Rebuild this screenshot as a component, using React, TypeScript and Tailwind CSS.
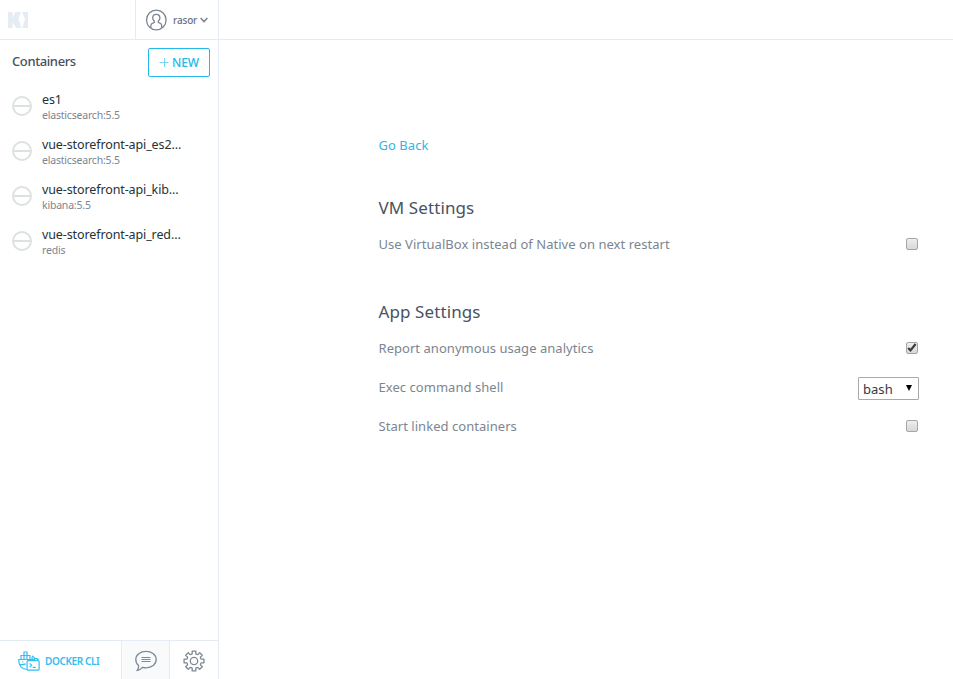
const containers = [
  { name: 'es1', image: 'elasticsearch:5.5' },
  { name: 'vue-storefront-api_es2...', image: 'elasticsearch:5.5' },
  { name: 'vue-storefront-api_kib...', image: 'kibana:5.5' },
  { name: 'vue-storefront-api_red...', image: 'redis' },
];

function gearPath() {
  const profile: [number, number][] = [
    [7.2, -22.5], [7.4, -14], [10.1, -10.5], [10.1, 10.5], [7.4, 14],
  ];
  const points: string[] = [];
  for (let tooth = 0; tooth < 8; tooth++) {
    for (const [radius, offset] of profile) {
      const a = ((tooth * 45 + offset) * Math.PI) / 180;
      points.push(`${(11 + radius * Math.cos(a)).toFixed(2)} ${(11 + radius * Math.sin(a)).toFixed(2)}`);
    }
  }
  return `M${points.join('L')}Z`;
}

function Logo() {
  return (
    <svg width="20" height="16" viewBox="0 0 20 16" fill="#e5ecf4">
      <path d="M0 0h4.6v5.5L7.6 0H13l-2.6 6.5L13.4 16H8L4.6 10v6H0z" />
      <path d="M14.2 0H20v16h-5.8L17 7z" />
    </svg>
  );
}

function UserIcon() {
  return (
    <svg width="22" height="22" viewBox="0 0 22 22" fill="none" stroke="#7a8491" strokeWidth="1.3">
      <circle cx="11.3" cy="11" r="9.8" />
      <path d="M5.9 18.5v-2.2c0-1.4 1-2 2.4-2.5l1-.5v-1.2C8.1 11 7.7 9.9 7.7 8.9c0-2.2 1.5-3.6 3.6-3.6s3.6 1.4 3.6 3.6c0 1-.4 2.1-1.6 3.2v1.2l1 .5c1.4.5 2.4 1.1 2.4 2.5v2.2" />
    </svg>
  );
}

function StoppedIcon() {
  return (
    <svg className="shrink-0" width="20" height="20" viewBox="0 0 20 20" fill="none" stroke="#dbe2e1" strokeWidth="2">
      <circle cx="10" cy="10" r="9" />
      <path d="M1 10h18" />
    </svg>
  );
}

function DockerIcon() {
  return (
    <svg width="22" height="20" viewBox="0 0 22 20" fill="none" stroke="#35bdf0" strokeWidth="1.2">
      <path d="M8.5 18.4C4 18.4.8 14.6.8 9.8V8.5h16.4M3 8.5V4.5h9v4M6 4.5v4M9 1v7.5M6 4.5V1h3v3.5M14.2 8.5c-.6-1.5-.2-2.6.6-3.4 1 .8 1.6 1.5 1.5 2.3 1.4-.3 2.7 0 3.8.7-.8 1-1.6 1.4-2.5 1.4M1.6 13.5c2 .4 4.2.2 6-.6M4.8 10.4v1.2" />
      <rect x="9.1" y="9.6" width="12" height="9.6" rx="1" fill="#fff" />
      <path d="m11.7 12.4 2 1.9-2 1.9M14.7 16.3h3" />
    </svg>
  );
}

function ChatIcon() {
  return (
    <svg width="22" height="22" viewBox="0 0 22 22" fill="none" stroke="#7f8996" strokeWidth="1.3">
      <path d="M3.6 15.6C1.8 14.1.8 11.9.8 9.6.8 4.8 5.2 1.4 11 1.4s10.2 3.4 10.2 8.2-4.4 8.2-10.2 8.2c-1.3 0-2.5-.2-3.6-.5-1.6 1.9-3.3 2.8-5.1 3.1 1-1.3 1.4-3.2 1.3-4.8z" />
      <path d="M6.5 7.5h9M6.5 9.5h9M6.5 11.5h9" strokeWidth="1" />
    </svg>
  );
}

function Checkbox({ checked = false }: { checked?: boolean }) {
  return (
    <span className="flex size-3 shrink-0 rounded-[2px] border border-[#a6a6a6] bg-linear-to-b from-[#eeeeee] to-[#d8d8d8]">
      {checked && (
        <svg className="-mt-px" width="10" height="11" viewBox="0 0 10 11" fill="none" stroke="#3c3c3c" strokeWidth="2.2">
          <path d="m1.2 6 2.3 2.4L8.6 2" />
        </svg>
      )}
    </span>
  );
}

export default function App() {
  return (
    <div className="flex h-[679px] w-[953px] flex-col overflow-hidden bg-white font-['Noto_Sans',sans-serif]">
      <header className="flex h-10 shrink-0 border-b border-[#e5ebf4]">
        <div className="flex w-[135px] items-center pt-px pl-2">
          <Logo />
        </div>
        <div className="flex w-[84px] items-center border-x border-[#e5ebf4] pl-[9px]">
          <UserIcon />
          <span className="ml-[6px] w-[24px] pt-px text-[10px] leading-4 font-medium tracking-[-0.15px] text-[#69727f]">rasor</span>
          <svg className="ml-[3px]" width="8" height="6" viewBox="0 0 8 6" fill="none" stroke="#7a8491" strokeWidth="1.5">
            <path d="m.6 1 3.4 3.6L7.4 1" />
          </svg>
        </div>
      </header>
      <div className="flex min-h-0 flex-1">
        <aside className="flex w-[219px] shrink-0 flex-col border-r border-[#e5ebf4]">
          <div className="flex h-[45px] items-start justify-between pt-2 pr-2 pl-3">
            <h2 className="mt-[4px] text-[13px] leading-[18px] font-medium tracking-[-0.4px] text-[#48505b]">Containers</h2>
            <button className="flex h-[29px] w-[62px] items-center rounded-[2px] border border-[#24b8eb] pl-[10px] text-[#24b8eb]">
              <svg width="10" height="10" viewBox="0 0 10 10" fill="none" stroke="currentColor" strokeWidth="1" opacity=".6">
                <path d="M.5 4.5h9M5.5 0v9" />
              </svg>
              <span className="ml-[3px] text-[12px] leading-4 font-medium tracking-[-0.1px]">NEW</span>
            </button>
          </div>
          <ul className="flex-1">
            {containers.map((c) => (
              <li key={c.name} className="flex h-[45px] items-center pl-3">
                <div className="mt-[-3px] flex">
                  <StoppedIcon />
                </div>
                <div className="mt-[-3px] ml-[10px] whitespace-nowrap">
                  <div className="text-[12.5px] leading-[17px] tracking-[-0.11px] text-[#253237]">{c.name}</div>
                  <div className="text-[10.5px] leading-[14px] tracking-[-0.2px] text-[#7c8591]">{c.image}</div>
                </div>
              </li>
            ))}
          </ul>
          <div className="flex h-[39px] border-t border-[#e5ebf4]">
            <div className="flex w-[121px] items-center pt-[2px] pl-[18px] text-[#35bdf0]">
              <DockerIcon />
              <span className="ml-[5px] text-[10px] leading-4 font-semibold tracking-[-0.38px] whitespace-nowrap">DOCKER CLI</span>
            </div>
            <div className="flex w-[49px] items-center border-x border-[#e5ebf4] bg-[#f9fafc] pt-px pl-[13px]">
              <ChatIcon />
            </div>
            <div className="flex flex-1 items-center justify-center pt-px">
              <svg width="22" height="22" viewBox="0 0 22 22" fill="none" stroke="#7f8996" strokeWidth="1.3">
                <path d={gearPath()} strokeLinejoin="round" />
                <circle cx="11" cy="11" r="3.7" />
              </svg>
            </div>
          </div>
        </aside>
        <main className="flex flex-1 flex-col pt-[95px] pr-[35px] pl-[159.5px] text-[13px] leading-5 tracking-[0.04px] text-[#7c8591]">
          <a className="text-[#35b4e2]">Go Back</a>
          <h1 className="mt-[40px] text-[17px] leading-[26px] tracking-[0.1px] text-[#4a5260]">VM Settings</h1>
          <div className="mt-[13px] flex h-5 items-center justify-between">
            <span>Use VirtualBox instead of Native on next restart</span>
            <Checkbox />
          </div>
          <h1 className="mt-[45px] text-[17px] leading-[26px] tracking-[0.1px] text-[#4a5260]">App Settings</h1>
          <div className="mt-[13px] flex h-5 items-center justify-between">
            <span>Report anonymous usage analytics</span>
            <Checkbox checked />
          </div>
          <div className="mt-[19px] flex h-5 items-center justify-between">
            <span>Exec command shell</span>
            <div className="mt-[3px] mr-[-1px] flex h-[23px] w-[61px] items-center rounded-[1px] border border-[#a9a9a9] pl-1 text-[#333b45]">
              <span className="w-[43px]">bash</span>
              <svg className="mt-[-2px]" width="6" height="6" viewBox="0 0 6 6">
                <path d="M0 0h6L3 6z" fill="#000" />
              </svg>
            </div>
          </div>
          <div className="mt-[19px] flex h-5 items-center justify-between">
            <span>Start linked containers</span>
            <Checkbox />
          </div>
        </main>
      </div>
    </div>
  );
}
